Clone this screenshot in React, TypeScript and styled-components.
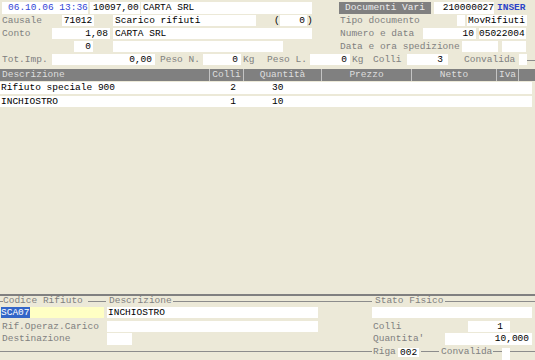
import React from 'react';
import styled, { createGlobalStyle } from 'styled-components';

const GlobalStyle = createGlobalStyle`
  html, body {
    margin: 0;
    padding: 0;
    background: #ece9d8;
  }
  body {
    font-family: "Liberation Mono", "Courier New", monospace;
    font-size: 9.5px;
    overflow: hidden;
  }
  * {
    box-sizing: border-box;
  }
`;

const COLUMNS = '209px 34px 78px 90px 85px 22px 1fr';

const Screen = styled.div`
  width: 535px;
  height: 360px;
  display: flex;
  flex-direction: column;
  background: #ece9d8;
  color: #000;
`;

const Row = styled.div<{ $h: number; $mt?: number }>`
  display: flex;
  align-items: flex-start;
  height: ${p => p.$h}px;
  margin-top: ${p => p.$mt ?? 0}px;
  flex-shrink: 0;
`;

const Label = styled.span<{ $w: number; $ml?: number; $lh?: number; $dark?: boolean }>`
  width: ${p => p.$w}px;
  margin-left: ${p => p.$ml ?? 0}px;
  line-height: ${p => p.$lh ?? 11}px;
  color: ${p => (p.$dark ? '#000' : '#808080')};
  white-space: nowrap;
  flex-shrink: 0;
`;

const Box = styled.div<{ $w: number; $ml?: number; $h?: number; $mt?: number; $right?: boolean; $center?: boolean; $pad?: number }>`
  width: ${p => p.$w}px;
  height: ${p => p.$h ?? 11}px;
  line-height: ${p => p.$h ?? 11}px;
  margin-left: ${p => p.$ml ?? 0}px;
  margin-top: ${p => p.$mt ?? 0}px;
  padding: 0 ${p => p.$pad ?? 1}px;
  background: #fff;
  text-align: ${p => (p.$center ? 'center' : p.$right ? 'right' : 'left')};
  white-space: nowrap;
  overflow: hidden;
  flex-shrink: 0;
`;

const DateBox = styled(Box)`
  color: #3446d6;
  padding-left: 6px;
`;

const FormTag = styled(Box)`
  background: #808080;
  color: #ececec;
`;

const Mode = styled.span<{ $ml: number }>`
  margin-left: ${p => p.$ml}px;
  line-height: 12px;
  color: #2b44c8;
  font-weight: bold;
`;

const YellowBox = styled(Box)`
  background: #ffffc4;
  padding: 0;
`;

const Selected = styled.span`
  background: #3366c8;
  color: #fff;
`;

const Rule = styled.div<{ $w?: number; $ml?: number; $h: number }>`
  ${p => (p.$w ? `width: ${p.$w}px; flex-shrink: 0;` : 'flex: 1;')}
  margin-left: ${p => p.$ml ?? 0}px;
  height: ${p => p.$h}px;
  border-bottom: 1px solid #8c8c8c;
`;

const HeaderRow = styled.div`
  display: grid;
  grid-template-columns: ${COLUMNS};
  height: 12px;
  margin-top: 2px;
  background: #808080;
  color: #dedede;
  flex-shrink: 0;
`;

const HeadCell = styled.div<{ $left?: boolean }>`
  line-height: 12px;
  text-align: ${p => (p.$left ? 'left' : 'center')};
  padding-left: ${p => (p.$left ? 2 : 0)}px;
  white-space: nowrap;
  overflow: hidden;

  & + & {
    border-left: 1px solid #c4c4c4;
  }
`;

const DataRow = styled.div<{ $mt: number; $h: number }>`
  display: grid;
  grid-template-columns: ${COLUMNS};
  width: 532px;
  height: ${p => p.$h}px;
  margin-top: ${p => p.$mt}px;
  background: #fff;
  flex-shrink: 0;
`;

const Cell = styled.div<{ $right?: boolean; $pl?: number; $pr?: number }>`
  line-height: 12px;
  text-align: ${p => (p.$right ? 'right' : 'left')};
  padding-left: ${p => p.$pl ?? 0}px;
  padding-right: ${p => p.$pr ?? 0}px;
  white-space: nowrap;
  overflow: hidden;
`;

const Spacer = styled.div`
  flex: 1;
`;

const Bar = styled.div`
  height: 2px;
  background: #808080;
  flex-shrink: 0;
`;

const rows = [
  { desc: 'Rifiuto speciale 900', colli: '2', qta: '30', mt: 1, h: 12 },
  { desc: 'INCHIOSTRO', colli: '1', qta: '10', mt: 2, h: 11 },
];

const App = () => {
  return (
    <Screen>
      <GlobalStyle />

      <Row $h={12} $mt={2}>
        <DateBox $w={86} $ml={2} $h={12}>06.10.06 13:36</DateBox>
        <Box $w={50} $ml={2} $h={12} $right $pad={3}>10097,00</Box>
        <Box $w={171} $ml={1} $h={12} $pad={2}>CARTA SRL</Box>
        <FormTag $w={92} $ml={27} $h={12} $center>Documenti Vari</FormTag>
        <Box $w={60} $ml={3} $h={12} $right $pad={0}>210000027</Box>
        <Mode $ml={3}>INSER</Mode>
      </Row>

      <Row $h={13} $mt={1}>
        <Label $w={50} $ml={2}>Causale</Label>
        <Box $w={32} $ml={10} $center>71012</Box>
        <Box $w={143} $ml={19} $pad={2}>Scarico rifiuti</Box>
        <Label $w={6} $ml={18} $dark>(</Label>
        <Box $w={27} $right $pad={2}>0</Box>
        <Label $w={6} $dark>)</Label>
        <Label $w={110} $ml={27}>Tipo documento</Label>
        <Box $w={8} $ml={7} />
        <Box $w={60} $ml={2}>MovRifiuti</Box>
      </Row>

      <Row $h={13}>
        <Label $w={40} $ml={2}>Conto</Label>
        <Box $w={58} $ml={10} $right $pad={2}>1,08</Box>
        <Box $w={199} $ml={3} $pad={2}>CARTA SRL</Box>
        <Label $w={80} $ml={28}>Numero e data</Label>
        <Box $w={53} $ml={3} $right $pad={2}>10</Box>
        <Box $w={47} $ml={3} $pad={0}>05022004</Box>
      </Row>

      <Row $h={13}>
        <Box $w={19} $ml={74} $right $pad={2}>0</Box>
        <Box $w={170} $ml={20} />
        <Label $w={120} $ml={57}>Data e ora spedizione</Label>
        <Box $w={36} $ml={2} />
        <Box $w={24} $ml={4} />
      </Row>

      <Row $h={13}>
        <Label $w={48} $ml={2}>Tot.Imp.</Label>
        <Box $w={103} $ml={2} $right $pad={3}>0,00</Box>
        <Label $w={42} $ml={5}>Peso N.</Label>
        <Box $w={38} $ml={1} $right $pad={3}>0</Box>
        <Label $w={14} $ml={2}>Kg</Label>
        <Label $w={42} $ml={10}>Peso L.</Label>
        <Box $w={40} $ml={1} $right $pad={3}>0</Box>
        <Label $w={14} $ml={2}>Kg</Label>
        <Label $w={30} $ml={7}>Colli</Label>
        <Box $w={41} $ml={4} $right $pad={5}>3</Box>
        <Label $w={52} $ml={16}>Convalida</Label>
        <Box $w={8} $ml={3} />
        <Rule $h={7} />
      </Row>

      <HeaderRow>
        <HeadCell $left>Descrizione</HeadCell>
        <HeadCell>Colli</HeadCell>
        <HeadCell>Quantità</HeadCell>
        <HeadCell>Prezzo</HeadCell>
        <HeadCell>Netto</HeadCell>
        <HeadCell>Iva</HeadCell>
        <HeadCell />
      </HeaderRow>

      {rows.map((r, idx) => (
        <DataRow key={idx} $mt={r.mt} $h={r.h}>
          <Cell $pl={1}>{r.desc}</Cell>
          <Cell $right $pr={7}>{r.colli}</Cell>
          <Cell $pl={29}>{r.qta}</Cell>
          <Cell />
          <Cell />
          <Cell />
          <Cell />
        </DataRow>
      ))}

      <Spacer />

      <Bar />
      <Row $h={9}>
        <Rule $w={3} $h={6} />
        <Label $w={83} $lh={9}>Codice Rifiuto</Label>
        <Rule $w={18} $h={6} $ml={2} />
        <Label $w={64} $ml={3} $lh={9}>Descrizione</Label>
        <Rule $w={199} $h={6} />
        <Label $w={70} $ml={3} $lh={9}>Stato Fisico</Label>
        <Rule $h={6} />
      </Row>

      <Row $h={11} $mt={2}>
        <YellowBox $w={103} $ml={1}>
          <Selected>SCA07</Selected>
        </YellowBox>
        <Box $w={211} $ml={3}>INCHIOSTRO</Box>
        <Box $w={160} $ml={54} />
      </Row>

      <Row $h={11} $mt={3}>
        <Label $w={100} $ml={2}>Rif.Operaz.Carico</Label>
        <Box $w={211} $ml={5} />
        <Label $w={30} $ml={55}>Colli</Label>
        <Box $w={42} $ml={65} $right $pad={7}>1</Box>
      </Row>

      <Row $h={12} $mt={1}>
        <Label $w={70} $ml={2} $lh={12}>Destinazione</Label>
        <Box $w={25} $ml={35} $h={12} />
        <Label $w={55} $ml={241} $lh={12}>Quantita'</Label>
        <Box $w={87} $ml={17} $h={12} $right $pad={3}>10,000</Box>
      </Row>

      <Row $h={13} $mt={2}>
        <Rule $w={372} $h={5} />
        <Label $w={24} $ml={1} $lh={10}>Riga</Label>
        <Box $w={21} $ml={1} $h={9} $mt={1} $pad={2}>002</Box>
        <Rule $w={18} $ml={2} $h={5} />
        <Label $w={52} $ml={2} $lh={10}>Convalida</Label>
        <Rule $w={9} $h={5} />
        <Box $w={8} $h={12} $mt={1} />
        <Rule $h={5} />
      </Row>
    </Screen>
  );
};

export default App;
